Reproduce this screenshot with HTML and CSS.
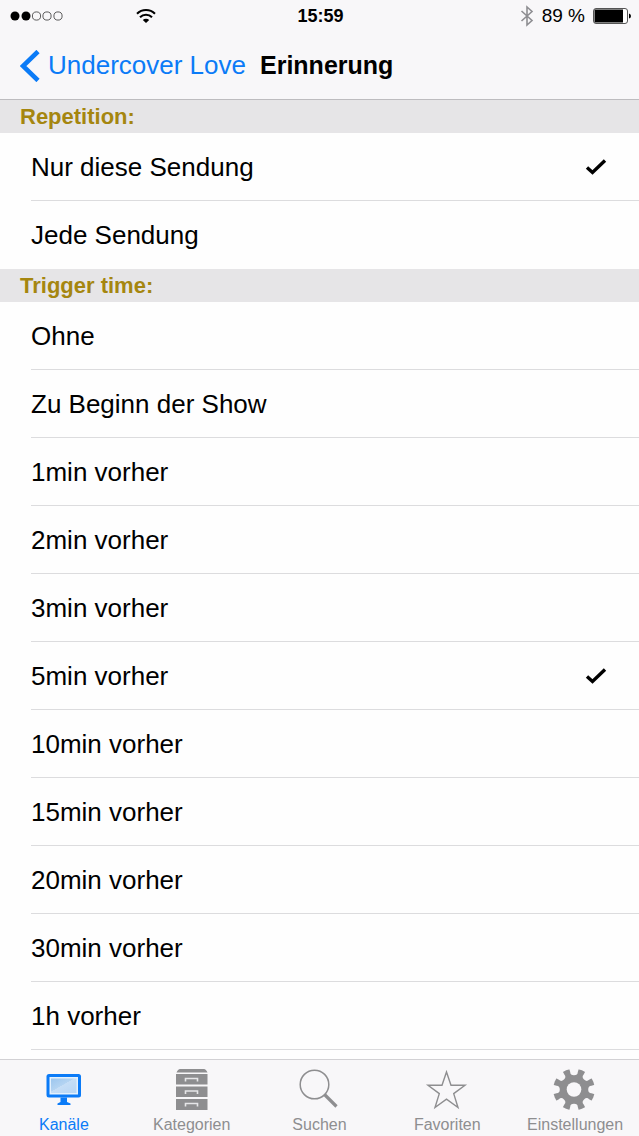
FILE: index.html
```html
<!DOCTYPE html>
<html lang="de">
<head>
<meta charset="utf-8">
<meta name="viewport" content="width=device-width, initial-scale=1">
<title>Erinnerung</title>
<link rel="stylesheet" href="styles.css">
</head>
<body>
<svg class="sprite" aria-hidden="true">
  <symbol id="check" viewBox="0 0 22 18"><path d="M2 9.500 7.500 14.500 20 2.500" fill="none" stroke="currentColor" stroke-width="3.400"/></symbol>
</svg>
<header class="top">
  <div class="status">
    <div class="status-left">
      <svg class="signal" viewBox="0 0 54 12" role="img" aria-label="Signal">
        <circle cx="5" cy="6" r="4.500"/><circle cx="16" cy="6" r="4.500"/>
        <g fill="none" stroke="#333" stroke-width="0.800"><circle cx="26.500" cy="6" r="4.100"/><circle cx="37" cy="6" r="4.100"/><circle cx="48" cy="6" r="4.100"/></g>
      </svg>
      <svg class="wifi" viewBox="0 0 20 14" role="img" aria-label="WLAN">
        <g fill="none" stroke="#000" stroke-width="2.100"><path d="M1 4.800a12.700 12.700 0 0 1 18 0"/><path d="M4 8.200a8.400 8.400 0 0 1 12 0"/></g>
        <path d="M10 14 6.800 11a4.500 4.500 0 0 1 6.400 0z"/>
      </svg>
    </div>
    <time class="clock">15:59</time>
    <div class="status-right">
      <svg class="bluetooth" viewBox="0 0 14 22" role="img" aria-label="Bluetooth"><path d="M1.500 6 12 15.500 7 20V2l5 4.500L1.500 16" fill="none" stroke="#8e8e92" stroke-width="1.600"/></svg>
      <span>89 %</span>
      <svg class="battery" viewBox="0 0 38 16" role="img" aria-label="Batterie">
        <rect x="0.500" y="0.500" width="34" height="15" rx="2.500" fill="#fff" stroke="#555"/>
        <path d="M1.500 1.500h28.500v13H1.500zM36 5.500q2 .5 2 2.500t-2 2.500z"/>
      </svg>
    </div>
  </div>
  <nav class="nav">
    <a class="back" href="#sendung">
      <svg class="chevron" viewBox="0 0 20 32" aria-hidden="true"><path d="M18 1.500 3 16l15 14.500" fill="none" stroke="currentColor" stroke-width="4.600"/></svg>
      <span>Undercover Love</span>
    </a>
    <h1 class="title">Erinnerung</h1>
  </nav>
</header>
<main class="content">
  <section aria-labelledby="repetition">
    <h2 class="heading" id="repetition">Repetition:</h2>
    <div class="list">
      <label class="row"><span>Nur diese Sendung</span><input type="radio" name="repetition" checked><svg class="check"><use href="#check"/></svg></label>
      <label class="row"><span>Jede Sendung</span><input type="radio" name="repetition"><svg class="check"><use href="#check"/></svg></label>
    </div>
  </section>
  <section aria-labelledby="trigger">
    <h2 class="heading" id="trigger">Trigger time:</h2>
    <div class="list list-open">
      <label class="row"><span>Ohne</span><input type="radio" name="trigger"><svg class="check"><use href="#check"/></svg></label>
      <label class="row"><span>Zu Beginn der Show</span><input type="radio" name="trigger"><svg class="check"><use href="#check"/></svg></label>
      <label class="row"><span>1min vorher</span><input type="radio" name="trigger"><svg class="check"><use href="#check"/></svg></label>
      <label class="row"><span>2min vorher</span><input type="radio" name="trigger"><svg class="check"><use href="#check"/></svg></label>
      <label class="row"><span>3min vorher</span><input type="radio" name="trigger"><svg class="check"><use href="#check"/></svg></label>
      <label class="row"><span>5min vorher</span><input type="radio" name="trigger" checked><svg class="check"><use href="#check"/></svg></label>
      <label class="row"><span>10min vorher</span><input type="radio" name="trigger"><svg class="check"><use href="#check"/></svg></label>
      <label class="row"><span>15min vorher</span><input type="radio" name="trigger"><svg class="check"><use href="#check"/></svg></label>
      <label class="row"><span>20min vorher</span><input type="radio" name="trigger"><svg class="check"><use href="#check"/></svg></label>
      <label class="row"><span>30min vorher</span><input type="radio" name="trigger"><svg class="check"><use href="#check"/></svg></label>
      <label class="row"><span>1h vorher</span><input type="radio" name="trigger"><svg class="check"><use href="#check"/></svg></label>
    </div>
  </section>
</main>
<nav class="tabs">
  <a class="tab tab-active" href="#kanaele" aria-current="page">
    <svg class="icon" viewBox="0 0 44 44" aria-hidden="true">
      <defs><linearGradient id="screen" x1="0" y1="0" x2="1" y2="1"><stop offset="0" stop-color="#9cc6ee"/><stop offset="0.450" stop-color="#b4d4f2"/><stop offset="0.460" stop-color="#c6def6"/><stop offset="1" stop-color="#b8d6f4"/></linearGradient></defs>
      <rect x="4.500" y="6" width="34.500" height="23.500" rx="2.500" fill="#0b7bf7"/>
      <rect x="7.500" y="9" width="28.500" height="17.500" fill="#e4f1fd"/>
      <rect x="9" y="10.500" width="25.500" height="14.500" fill="url(#screen)"/>
      <path d="M18.500 29.500h6.500v4.500l3.500 1.500v1.500H15.500v-1.500l3-1.500z" fill="#0b7bf7"/>
    </svg>
    <span>Kanäle</span>
  </a>
  <a class="tab" href="#kategorien">
    <svg class="icon" viewBox="0 0 44 44" aria-hidden="true">
      <path d="M10 1h24q2 0 3.500 3.500h-31Q8 1 10 1zM6 6h31.500v10.500H6zM6 18.500h31.500V29H6zM6 31h31.500v11H6z" fill="#8e8e90"/>
      <path d="M15.500 13.500v-3h12v3M15.500 26v-3h12v3M15.500 38.500v-3h12v3" fill="none" stroke="#e6e6e8" stroke-width="1.600"/>
    </svg>
    <span>Kategorien</span>
  </a>
  <a class="tab" href="#suchen">
    <svg class="icon" viewBox="0 0 44 44" aria-hidden="true"><circle cx="17.500" cy="16.500" r="14.300" fill="none" stroke="#8e8e90" stroke-width="1.500"/><path d="m27.500 26.500 12 12" stroke="#8e8e90" stroke-width="3.200"/></svg>
    <span>Suchen</span>
  </a>
  <a class="tab" href="#favoriten">
    <svg class="icon" viewBox="0 0 44 44" aria-hidden="true"><path d="M21.500 4 26 17.300H40L28.700 25.600 33 39.500 21.500 31.200 10 39.500 14.300 25.600 3 17.300H17z" fill="none" stroke="#8e8e90" stroke-width="1.400"/></svg>
    <span>Favoriten</span>
  </a>
  <a class="tab" href="#einstellungen">
    <svg class="icon" viewBox="0 0 44 44" aria-hidden="true">
      <mask id="gear">
        <rect width="44" height="44" fill="#fff"/>
        <circle cx="21" cy="21.500" r="7.300"/>
        <path id="notch" d="M16 0 17.200 4Q17.200 7.300 21 7.300T24.800 4L26 0z"/>
        <use href="#notch" transform="rotate(45 21 21.500)"/><use href="#notch" transform="rotate(90 21 21.500)"/><use href="#notch" transform="rotate(135 21 21.500)"/><use href="#notch" transform="rotate(180 21 21.500)"/><use href="#notch" transform="rotate(225 21 21.500)"/><use href="#notch" transform="rotate(270 21 21.500)"/><use href="#notch" transform="rotate(315 21 21.500)"/>
      </mask>
      <circle cx="21" cy="21.500" r="20.800" fill="#8e8e90" mask="url(#gear)"/>
    </svg>
    <span>Einstellungen</span>
  </a>
</nav>
</body>
</html>
```
FILE: styles.css
```css
* { box-sizing: border-box; }

body {
  margin: 0;
  height: 100vh;
  display: flex;
  flex-direction: column;
  background: #fefefe;
  color: #000;
  font-family: "Liberation Sans", Arial, sans-serif;
}

a { color: inherit; text-decoration: none; }
svg { display: block; flex: none; }
.sprite { position: absolute; width: 0; height: 0; }

.top {
  flex: none;
  background: #f8f7f9;
  border-bottom: 1px solid #bdbcbf;
}

.status {
  display: grid;
  grid-template-columns: 1fr auto 1fr;
  align-items: center;
  height: 32px;
  padding: 0 8px 0 10px;
  font-size: 19px;
}
.status-left { display: flex; align-items: center; gap: 72px; }
.status-right { display: flex; align-items: center; justify-content: flex-end; gap: 8px; }
.signal { width: 54px; height: 12px; }
.wifi { width: 20px; height: 14px; }
.clock { font-size: 18px; font-weight: bold; }
.bluetooth { width: 14px; height: 22px; }
.battery { width: 38px; height: 16px; }

.nav {
  display: flex;
  align-items: center;
  gap: 14px;
  height: 67px;
  padding: 0 20px;
  font-size: 26px;
}
.back { display: flex; align-items: center; gap: 8px; color: #0b7bf7; }
.chevron { width: 20px; height: 32px; }
.title { margin: 0; font-size: 25px; font-weight: bold; }

.content { flex: 1; min-height: 0; overflow: auto; }

.heading {
  margin: 0;
  padding: 0 20px;
  background: #e6e5e7;
  color: #a5860f;
  font-size: 22px;
  line-height: 33px;
  font-weight: bold;
}

.list { padding-left: 31px; }
.row {
  display: flex;
  align-items: center;
  height: 68px;
  padding-right: 32px;
  border-bottom: 1px solid #dcdcde;
  font-size: 26px;
}
.row:last-child { border-bottom-color: transparent; }
.list-open .row:last-child { border-bottom-color: #dcdcde; }
.row span { flex: 1; padding-top: 2px; }
.row input { appearance: none; width: 0; height: 0; margin: 0; }
.check { width: 22px; height: 18px; visibility: hidden; }
input:checked + .check { visibility: visible; }

.tabs {
  flex: none;
  display: grid;
  grid-template-columns: repeat(5, 1fr);
  height: 77px;
  padding-top: 8px;
  border-top: 1px solid #d2d1d4;
  background: #f8f7f9;
  color: #8e8e90;
  font-size: 16px;
}
.tab { display: flex; flex-direction: column; align-items: center; gap: 4px; }
.tab-active { color: #0b7bf7; }
.icon { width: 44px; height: 44px; }
```
